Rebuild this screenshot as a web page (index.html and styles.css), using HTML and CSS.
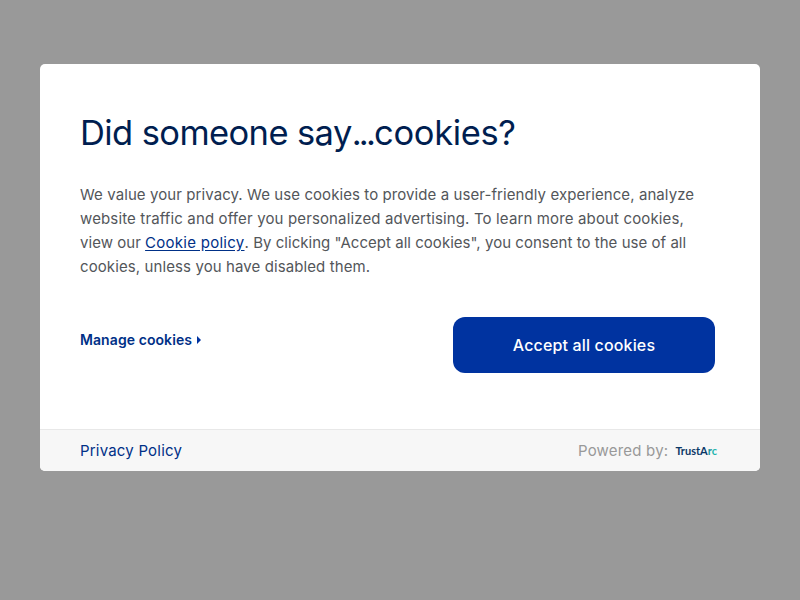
FILE: index.html
```
<!DOCTYPE html>
<html lang="en">
<head>
    <meta charset="UTF-8">
    <meta name="viewport" content="width=device-width, initial-scale=1.0">
    <title>Cookie Preferences</title>
    <link rel="stylesheet" href="styles.css">
</head>
<body>
    <div class="modal" role="dialog" aria-labelledby="title">
        <div class="content">
            <h1 id="title">Did someone say<span class="dots">...</span><span class="title-end">cookies?</span></h1>
            <p class="message">
                <span class="line line-1">We value your privacy. We use cookies to provide a user-friendly experience, analyze</span>
                <span class="line line-2">website traffic and offer you personalized advertising. To learn more about cookies,</span>
                <span class="line line-3">view our <a href="#">Cookie policy</a>. By clicking "Accept all cookies", you consent to the use of all</span>
                <span class="line line-4">cookies, unless you have disabled them.</span>
            </p>
            <div class="actions">
                <a class="manage" href="#"><span class="manage-text">Manage cookies</span><span class="caret"></span></a>
                <button class="accept" type="button">Accept all cookies</button>
            </div>
        </div>
        <div class="footer">
            <a class="privacy" href="#">Privacy Policy</a>
            <div class="powered">
                <span class="powered-text">Powered by:</span>
                <span class="logo">TrustA<span class="logo-r">r</span><span class="logo-c">c</span></span>
            </div>
        </div>
    </div>
</body>
</html>
```
FILE: styles.css
```
* {
    box-sizing: border-box;
}

body {
    margin: 0;
    padding: 64px 40px;
    min-height: 100vh;
    background-color: #999;
    font-family: Inter, 'Liberation Sans', sans-serif;
}

.modal {
    height: 407px;
    display: flex;
    flex-direction: column;
    background: #fff;
    border-radius: 5px;
    overflow: hidden;
}

.content {
    flex-grow: 1;
    padding: 45px 45px 0 40px;
}

h1 {
    margin: 0;
    color: #001e50;
    font-size: 34.5px;
    font-weight: 400;
    line-height: 48px;
    letter-spacing: -0.6px;
    white-space: nowrap;
}

.dots {
    letter-spacing: -2.8px;
}

.title-end {
    margin-left: 1px;
    letter-spacing: -0.35px;
}

.message {
    margin: 26px 0 0;
    color: #53565a;
    font-size: 15px;
    line-height: 24px;
}

.line {
    display: block;
    white-space: nowrap;
}

.line-1 {
    letter-spacing: 0.083px;
}

.line-2 {
    letter-spacing: 0.14px;
}

.line-3 {
    letter-spacing: 0.035px;
}

.line-4 {
    letter-spacing: 0.1px;
}

.message a {
    color: #003087;
    letter-spacing: 0.27px;
    text-underline-offset: 2px;
}

.actions {
    display: flex;
    justify-content: space-between;
    align-items: flex-start;
    margin-top: 38px;
}

.manage {
    display: flex;
    align-items: center;
    margin-top: 11px;
    color: #003087;
    font-size: 14px;
    font-weight: 600;
    line-height: 24px;
    letter-spacing: 0.08px;
    text-decoration: none;
}

.caret {
    margin-left: 5px;
    border-left: 4px solid #0033a0;
    border-top: 4px solid transparent;
    border-bottom: 4px solid transparent;
}

.accept {
    width: 262px;
    height: 56px;
    padding: 0;
    border: 0;
    border-radius: 12px;
    background: #0033a0;
    color: #fff;
    font-family: inherit;
    font-size: 16px;
    font-weight: 500;
    letter-spacing: 0.15px;
}

.footer {
    display: flex;
    justify-content: space-between;
    align-items: center;
    height: 42px;
    padding: 0 43px 0 40px;
    border-top: 1px solid #e8e8e8;
    background: #f7f7f7;
    font-size: 15px;
    letter-spacing: 0.2px;
}

.privacy {
    color: #003087;
    text-decoration: none;
}

.powered {
    display: flex;
    align-items: center;
    color: #999;
}

.logo {
    margin-left: 7px;
    color: #0b3866;
    font-family: Lato, sans-serif;
    font-size: 11px;
    font-weight: 700;
    letter-spacing: 0;
}

.logo-r {
    color: #1794a0;
}

.logo-c {
    color: #22b5ad;
}
```
